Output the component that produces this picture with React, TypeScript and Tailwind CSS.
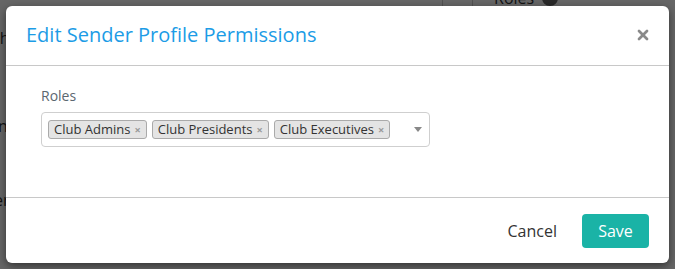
import { X } from 'lucide-react';

const ROLES = ['Club Admins', 'Club Presidents', 'Club Executives'];

export default function App() {
  return (
    <div className="relative w-[675px] h-[269px] overflow-hidden bg-white" style={{ fontFamily: '"Open Sans", "Liberation Sans", sans-serif' }}>
      {/* page behind the modal */}
      <div className="absolute left-[-6px] top-[26px] text-[16px] text-[#333]">th</div>
      <div className="absolute left-[-6px] top-[114px] text-[16px] text-[#333]">in</div>
      <div className="absolute left-[-6px] top-[188px] text-[16px] text-[#333]">er</div>
      <div className="absolute left-[442px] top-0 h-[6px] w-px bg-[#ccc]" />
      <div className="absolute left-[472px] top-0 h-[6px] w-px bg-[#ccc]" />
      <div className="absolute left-[494px] top-[-14px] flex items-center gap-2 text-[16px] text-[#333]">
        Roles
        <span className="w-[16px] h-[16px] rounded-full bg-[#666]" />
      </div>

      {/* overlay */}
      <div className="absolute inset-0 bg-black/60" />

      {/* modal */}
      <div className="absolute left-[6px] top-[6px] w-[663px] h-[257px] bg-white rounded-[6px] shadow-[0_3px_9px_rgba(0,0,0,0.5)] flex flex-col">
        <div className="h-[60px] flex items-center justify-between pl-[20px] pr-[18px] pb-[2px] border-b border-[#c8c8c8]">
          <h2 className="text-[20px] text-[#1c9ce6] leading-none">Edit Sender Profile Permissions</h2>
          <X size={16} strokeWidth={4} className="text-[#8a8a8a]" />
        </div>

        <div className="flex-1 pl-[35px] pt-[20px] border-b border-[#c8c8c8]">
          <div className="text-[14px] text-[#5b6770] leading-[20px] mb-[6px]">Roles</div>
          <div className="w-[389px] h-[35px] border border-[#cfcfcf] rounded-[4px] flex items-center pl-[6px] pr-[6px]">
            <div className="flex-1 flex items-center gap-[5px]">
              {ROLES.map(r => (
                <span key={r} className="h-[19px] flex items-center gap-[4px] bg-[#e4e4e4] border border-[#aaa] rounded-[3px] pl-[5px] pr-[5px] text-[13px] text-[#333] leading-none">
                  {r}
                  <span className="text-[11px] text-[#999] font-bold">×</span>
                </span>
              ))}
            </div>
            <span className="w-0 h-0 border-l-[4px] border-r-[4px] border-t-[5px] border-l-transparent border-r-transparent border-t-[#888] mr-[1px]" />
          </div>
        </div>

        <div className="h-[65px] flex items-center justify-end gap-[25px] pr-[20px]">
          <button className="text-[16px] text-[#333]">Cancel</button>
          <button className="w-[67px] h-[34px] rounded-[4px] bg-[#1ab3a6] text-white text-[16px]">Save</button>
        </div>
      </div>
    </div>
  );
}
